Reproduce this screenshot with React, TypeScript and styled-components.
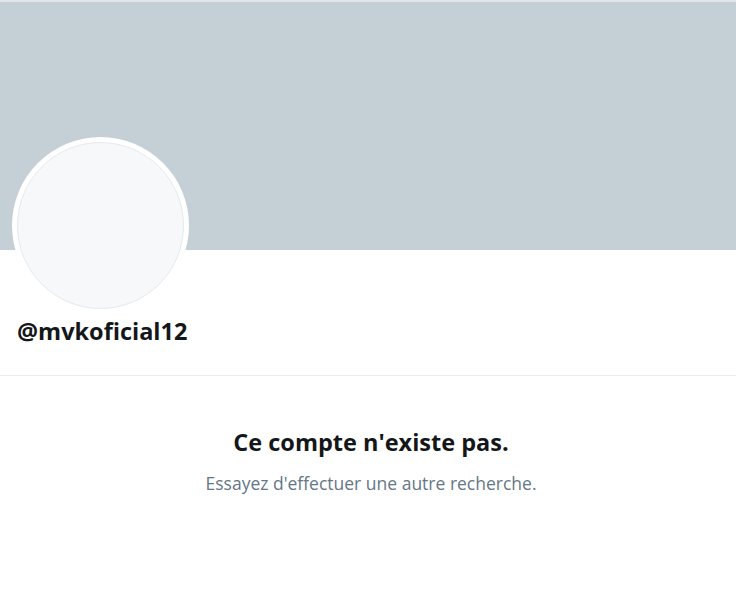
import React from "react";
import styled, { createGlobalStyle } from "styled-components";

const Global = createGlobalStyle`
  html, body { margin: 0; padding: 0; background: #ffffff; }
  body { font-family: "Open Sans", "Noto Sans", "Liberation Sans", sans-serif; }
  * { box-sizing: border-box; }
`;

const Page = styled.div`
  width: 736px;
  min-height: 601px;
  background: #ffffff;
  display: flex;
  flex-direction: column;
`;

const TopStrip = styled.div`
  height: 2px;
  background: #dfe5e8;
`;

const Banner = styled.div`
  height: 248px;
  background: #c4cfd6;
`;

const Header = styled.div`
  padding: 0 12px;
  border-bottom: 1px solid #e6ecf0;
  height: 126px;
  display: flex;
  flex-direction: column;
`;

const AvatarRing = styled.div`
  width: 177px;
  height: 177px;
  margin-top: -113px;
  border-radius: 50%;
  background: #ffffff;
  padding: 5px;
`;

const AvatarInner = styled.div`
  width: 100%;
  height: 100%;
  border-radius: 50%;
  background: #f6f8fa;
  border: 1px solid #e6eaed;
`;

const Handle = styled.div`
  margin-top: 2px;
  margin-left: 5px;
  font-size: 23.5px;
  font-weight: 700;
  line-height: 30px;
  color: #14171a;
`;

const Empty = styled.div`
  display: flex;
  flex-direction: column;
  align-items: center;
  padding-top: 50px;
  padding-left: 6px;
`;

const Title = styled.div`
  font-size: 23.5px;
  font-weight: 700;
  line-height: 32px;
  color: #14171a;
`;

const Sub = styled.div`
  margin-top: 13px;
  font-size: 17.5px;
  line-height: 24px;
  color: #657786;
`;

export default function App() {
  return (
    <>
      <Global />
      <Page>
        <TopStrip />
        <Banner />
        <Header>
          <AvatarRing>
            <AvatarInner />
          </AvatarRing>
          <Handle>@mvkoficial12</Handle>
        </Header>
        <Empty>
          <Title>Ce compte n'existe pas.</Title>
          <Sub>Essayez d'effectuer une autre recherche.</Sub>
        </Empty>
      </Page>
    </>
  );
}
